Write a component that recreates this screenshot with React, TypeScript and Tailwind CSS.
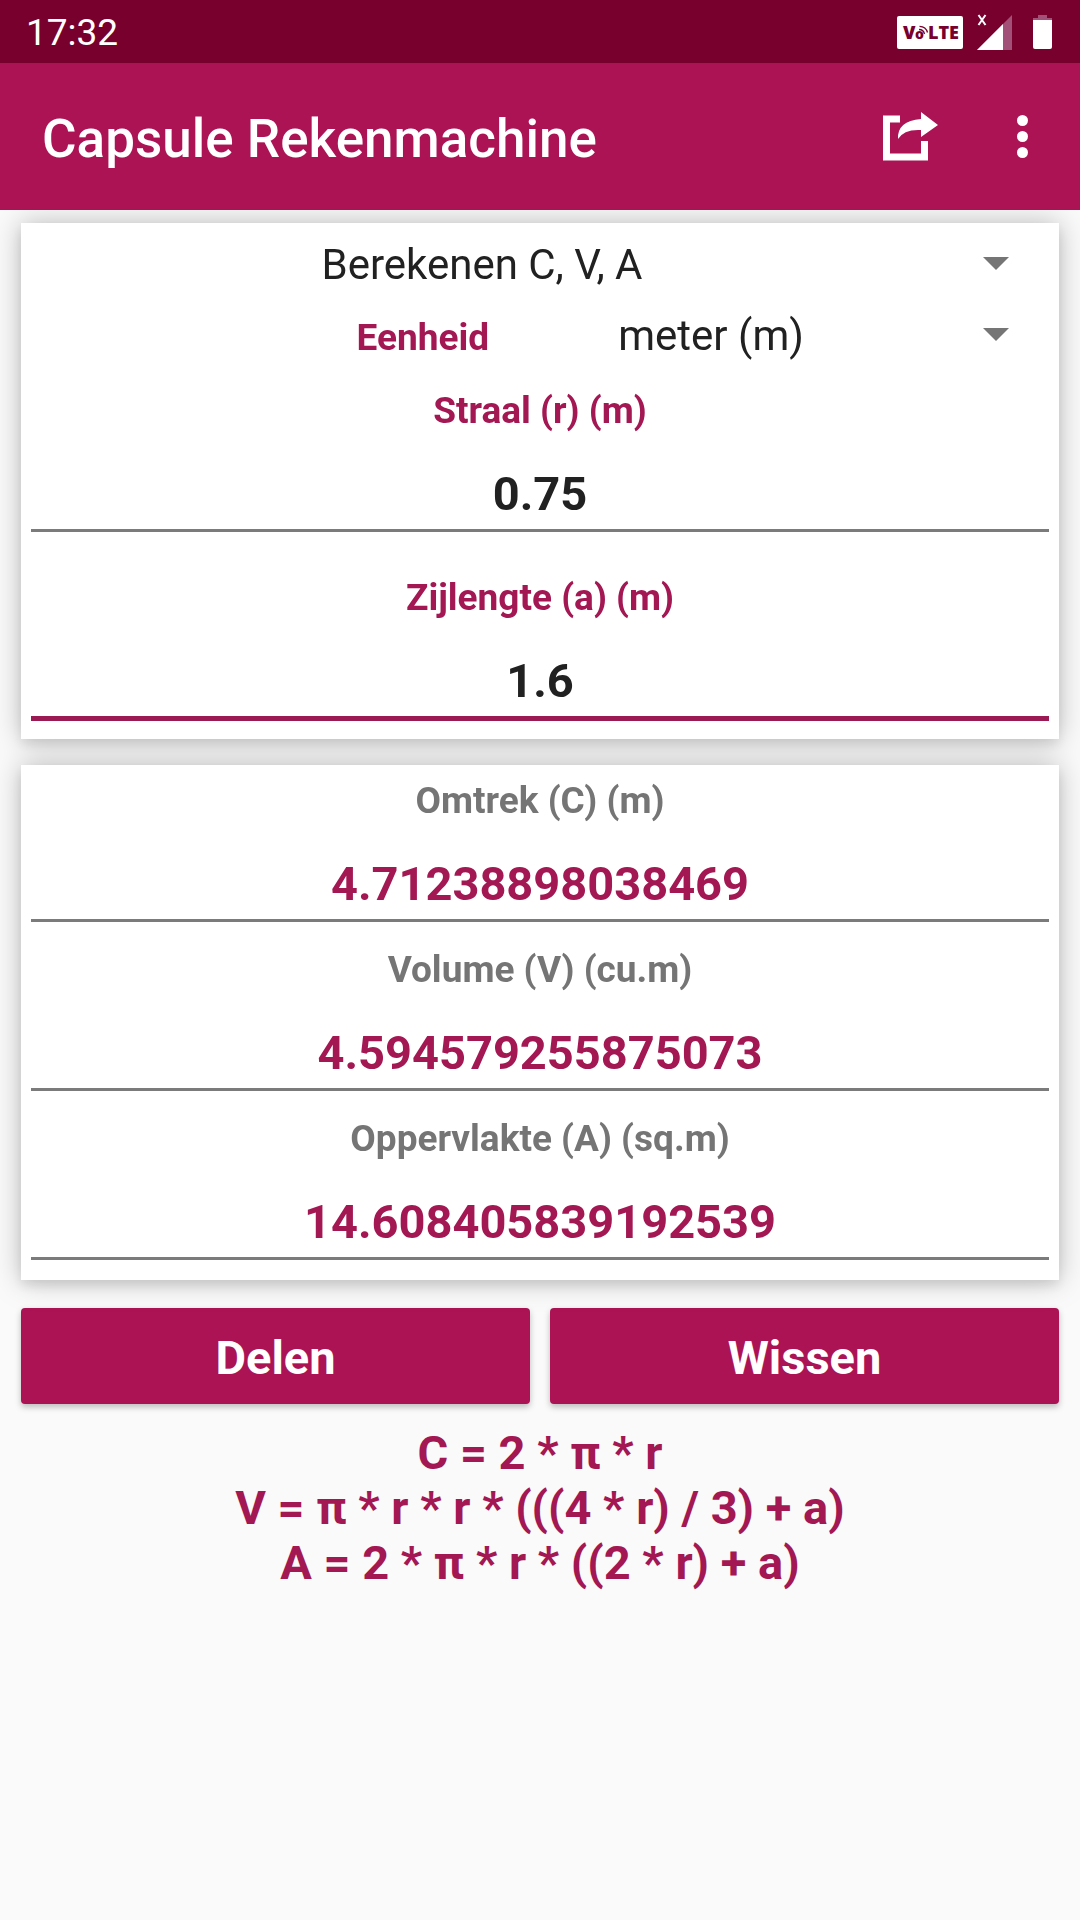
import React, { useState } from 'react';

const units = [
  { value: 'mm', label: 'millimeter (mm)' },
  { value: 'cm', label: 'centimeter (cm)' },
  { value: 'm', label: 'meter (m)' },
  { value: 'km', label: 'kilometer (km)' },
];

const modes = ['Berekenen C, V, A', 'Berekenen r, V, A', 'Berekenen r, C, A'];

const formulas = [
  'C = 2 * π * r',
  'V = π * r * r * (((4 * r) / 3) + a)',
  'A = 2 * π * r * ((2 * r) + a)',
];

const StatusBar: React.FC = () => (
  <div className="flex h-[63px] items-center justify-between bg-[#78002d] pl-[26px] pr-7 pt-[2px] text-white">
    <span className="text-[37px] leading-[44px]">17:32</span>
    <div className="flex items-center">
      {/* VoLTE badge */}
      <svg width="67" height="33" viewBox="0 0 67 33" className="mr-3" aria-hidden="true">
        <rect x="1" width="66" height="33" rx="2" fill="#fff" />
        <g fill="#78002d" fontFamily="Open Sans, sans-serif" fontWeight="800">
          <text x="7" y="23" fontSize="18">V</text>
          <text x="19" y="23" fontSize="14">o</text>
          <text x="32" y="23" fontSize="18">LTE</text>
        </g>
        <g fill="none" stroke="#78002d" strokeWidth="1.3">
          <path d="M23 13.5 Q27.500 13.500 28.500 18" />
          <path d="M23.500 10.300 Q30 10.500 31.500 16.500" />
        </g>
      </svg>
      {/* Signal */}
      <svg width="38" height="38" viewBox="0 0 38 38" className="mr-5" aria-hidden="true">
        <path d="M37 1 V36 H2 Z" fill="#a35078" />
        <path d="M28 10 V36 H2 Z" fill="#fff" />
        <path d="M3.500 1 L10.500 11 M10.500 1 L3.500 11" stroke="#fff" strokeWidth="2" />
      </svg>
      {/* Battery */}
      <svg width="19" height="35" viewBox="0 0 19 35" aria-hidden="true">
        <path d="M5 0 H14 V3 H19 V6 H0 V3 H5 Z" fill="#a35078" />
        <path d="M0 5 H19 V32 Q19 34 17 34 H2 Q0 34 0 32 Z" fill="#fff" />
      </svg>
    </div>
  </div>
);

const AppBar: React.FC = () => (
  <header className="relative z-10 flex h-[147px] items-center justify-between bg-[#ab1355] pl-[42px] pr-10 text-white">
    <h1 className="pt-1 text-[53px] font-medium leading-[62px]">Capsule Rekenmachine</h1>
    <div className="flex items-center gap-[67px]">
      <button type="button" aria-label="Delen">
        <svg width="56" height="50" viewBox="0 0 56 50">
          <path d="M18 7 H4.500 V45 H42.500 V29" fill="none" stroke="#fff" strokeWidth="7" />
          <path d="M39 0 L56 13 L39 25 V18 Q22 17 16 27 Q15 9 39 7 Z" fill="#fff" />
        </svg>
      </button>
      <button type="button" aria-label="Meer opties" className="px-3">
        <svg width="11" height="43" viewBox="0 0 11 43">
          <circle cx="5.500" cy="5.500" r="5.500" fill="#fff" />
          <circle cx="5.500" cy="21.500" r="5.500" fill="#fff" />
          <circle cx="5.500" cy="37.500" r="5.500" fill="#fff" />
        </svg>
      </button>
    </div>
  </header>
);

interface SpinnerProps {
  id: string;
  label?: string;
  value: string;
  onChange: (value: string) => void;
  options: { value: string; label: string }[];
}

const Spinner: React.FC<SpinnerProps> = ({ id, label, value, onChange, options }) => (
  <div className="relative flex-1">
    <select
      id={id}
      aria-label={label}
      value={value}
      onChange={(e) => onChange(e.target.value)}
      className="h-[71px] w-full appearance-none bg-transparent pr-[116px] text-center text-[42px] leading-[50px] text-[#212121] outline-none [text-align-last:center]"
    >
      {options.map((o) => (
        <option key={o.value} value={o.value}>{o.label}</option>
      ))}
    </select>
    <svg
      width="26"
      height="13"
      viewBox="0 0 26 13"
      className="pointer-events-none absolute right-10 top-7"
      aria-hidden="true"
    >
      <path d="M0 0 H26 L13 13 Z" fill="#757575" />
    </svg>
  </div>
);

interface FieldProps {
  id: string;
  label: string;
  value: string;
  active: boolean;
  onFocus: () => void;
  onChange: (value: string) => void;
}

const Field: React.FC<FieldProps> = ({ id, label, value, active, onFocus, onChange }) => (
  <div className="flex flex-col">
    <label htmlFor={id} className="text-center text-[37px] font-bold leading-[44px] text-[#a31753]">
      {label}
    </label>
    <input
      id={id}
      type="text"
      inputMode="decimal"
      value={value}
      onFocus={onFocus}
      onChange={(e) => onChange(e.target.value)}
      className={`w-full pb-[7px] pt-[33px] text-center text-[47px] font-bold leading-[56px] text-[#212121] outline-none ${
        active ? 'border-b-[5px] border-[#9c1a54]' : 'border-b-[3px] border-[#7b7b7b]'
      }`}
    />
  </div>
);

const Result: React.FC<{ id: string; label: string; value: string }> = ({ id, label, value }) => (
  <div className="flex flex-col text-center font-bold">
    <label htmlFor={id} className="text-[37px] leading-[44px] text-[#757575]">{label}</label>
    <output
      id={id}
      className="border-b-[3px] border-[#7b7b7b] pb-[7px] pt-[33px] text-[47px] leading-[56px] text-[#a31753]"
    >
      {value}
    </output>
  </div>
);

const App: React.FC = () => {
  const [mode, setMode] = useState(modes[0]);
  const [unit, setUnit] = useState('m');
  const [radius, setRadius] = useState('0.75');
  const [side, setSide] = useState('1.6');
  const [active, setActive] = useState('side');

  const r = parseFloat(radius);
  const a = parseFloat(side);
  const show = (n: number) => (Number.isFinite(n) ? String(n) : '');

  const clear = () => {
    setRadius('');
    setSide('');
  };

  return (
    <div className="min-h-screen bg-[#fafafa] font-[Roboto,sans-serif]">
      <StatusBar />
      <AppBar />

      <main className="px-[21px] pt-[13px]">
        {/* One shadow for both cards, so neither darkens the other */}
        <div className="flex flex-col gap-[26px] [filter:drop-shadow(0_6px_6px_rgba(0,0,0,0.08))_drop-shadow(0_0_14px_rgba(0,0,0,0.25))]">
          <section className="bg-white px-[10px] pb-[18px] pt-[6px]">
            <Spinner
              id="mode"
              label="Berekening"
              value={mode}
              onChange={setMode}
              options={modes.map((m) => ({ value: m, label: m }))}
            />
            <div className="flex items-center">
              <label htmlFor="unit" className="w-[45%] pt-1 text-right text-[37px] font-bold leading-[44px] text-[#a31753]">
                Eenheid
              </label>
              <Spinner id="unit" value={unit} onChange={setUnit} options={units} />
            </div>
            <div className="mt-[18px] flex flex-col gap-11">
              <Field
                id="radius"
                label={`Straal (r) (${unit})`}
                value={radius}
                active={active === 'radius'}
                onFocus={() => setActive('radius')}
                onChange={setRadius}
              />
              <Field
                id="side"
                label={`Zijlengte (a) (${unit})`}
                value={side}
                active={active === 'side'}
                onFocus={() => setActive('side')}
                onChange={setSide}
              />
            </div>
          </section>

          <section className="flex flex-col gap-[26px] bg-white px-[10px] pb-5 pt-[14px]">
            <Result id="c" label={`Omtrek (C) (${unit})`} value={show(2 * Math.PI * r)} />
            <Result id="v" label={`Volume (V) (cu.${unit})`} value={show(Math.PI * r * r * ((4 * r) / 3 + a))} />
            <Result id="area" label={`Oppervlakte (A) (sq.${unit})`} value={show(2 * Math.PI * r * (2 * r + a))} />
          </section>
        </div>

        <div className="mt-7 flex gap-5 text-[47px] font-bold leading-[56px] text-white">
          <button type="button" className="h-24 flex-1 rounded bg-[#ab1355] pt-1 shadow-[0_3px_6px_rgba(0,0,0,0.25)]">
            Delen
          </button>
          <button type="button" onClick={clear} className="h-24 flex-1 rounded bg-[#ab1355] pt-1 shadow-[0_3px_6px_rgba(0,0,0,0.25)]">
            Wissen
          </button>
        </div>

        <div className="mt-[21px] text-center text-[47px] font-bold leading-[55px] text-[#a31753]">
          {formulas.map((f) => (
            <p key={f}>{f}</p>
          ))}
        </div>
      </main>
    </div>
  );
};

export default App;
